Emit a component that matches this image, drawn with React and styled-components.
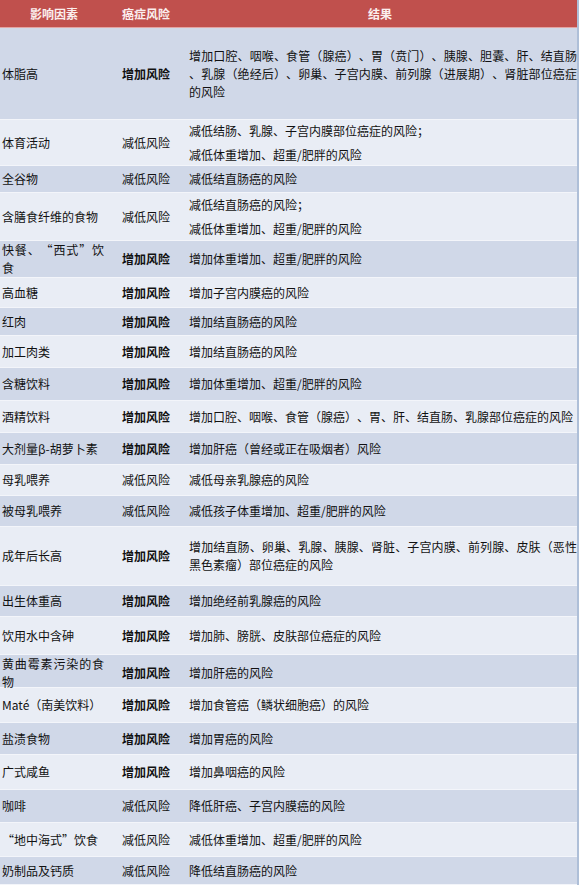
import styled, { createGlobalStyle } from "styled-components";

const GlobalStyle = createGlobalStyle`
    html, body {
        margin: 0;
        padding: 0;
        background: #e9edf4;
        overflow: hidden;
    }
    body {
        font-family: "Noto Sans CJK SC", "Liberation Sans", sans-serif;
    }
`;

const UP = "增加风险";
const DOWN = "减低风险";

const rows = [
    { h: 92, f: "体脂高", r: UP, t: ["增加口腔、咽喉、食管（腺癌）、胃（贲门）、胰腺、胆囊、肝、结直肠、乳腺（绝经后）、卵巢、子宫内膜、前列腺（进展期）、肾脏部位癌症的风险"] },
    { h: 46, f: "体育活动", r: DOWN, t: ["减低结肠、乳腺、子宫内膜部位癌症的风险；", "减低体重增加、超重/肥胖的风险"] },
    { h: 27, f: "全谷物", r: DOWN, t: ["减低结直肠癌的风险"] },
    { h: 48, f: "含膳食纤维的食物", r: DOWN, t: ["减低结直肠癌的风险；", "减低体重增加、超重/肥胖的风险"] },
    { h: 37, f: "快餐、“西式”饮食", r: UP, t: ["增加体重增加、超重/肥胖的风险"] },
    { h: 30, f: "高血糖", r: UP, t: ["增加子宫内膜癌的风险"] },
    { h: 28, f: "红肉", r: UP, t: ["增加结直肠癌的风险"] },
    { h: 32, f: "加工肉类", r: UP, t: ["增加结直肠癌的风险"] },
    { h: 33, f: "含糖饮料", r: UP, t: ["增加体重增加、超重/肥胖的风险"] },
    { h: 32, f: "酒精饮料", r: UP, t: ["增加口腔、咽喉、食管（腺癌）、胃、肝、结直肠、乳腺部位癌症的风险"] },
    { h: 32, f: "大剂量β-胡萝卜素", r: UP, t: ["增加肝癌（曾经或正在吸烟者）风险"] },
    { h: 31, f: "母乳喂养", r: DOWN, t: ["减低母亲乳腺癌的风险"] },
    { h: 31, f: "被母乳喂养", r: DOWN, t: ["减低孩子体重增加、超重/肥胖的风险"] },
    { h: 59, f: "成年后长高", r: UP, t: ["增加结直肠、卵巢、乳腺、胰腺、肾脏、子宫内膜、前列腺、皮肤（恶性黑色素瘤）部位癌症的风险"] },
    { h: 31, f: "出生体重高", r: UP, t: ["增加绝经前乳腺癌的风险"] },
    { h: 38, f: "饮用水中含砷", r: UP, t: ["增加肺、膀胱、皮肤部位癌症的风险"] },
    { h: 33, f: "黄曲霉素污染的食物", r: UP, t: ["增加肝癌的风险"] },
    { h: 35, f: "Maté（南美饮料）", r: UP, t: ["增加食管癌（鳞状细胞癌）的风险"] },
    { h: 32, f: "盐渍食物", r: UP, t: ["增加胃癌的风险"] },
    { h: 35, f: "广式咸鱼", r: UP, t: ["增加鼻咽癌的风险"] },
    { h: 33, f: "咖啡", r: DOWN, t: ["降低肝癌、子宫内膜癌的风险"] },
    { h: 34, f: "“地中海式”饮食", r: DOWN, t: ["减低体重增加、超重/肥胖的风险"] },
    { h: 28, f: "奶制品及钙质", r: DOWN, t: ["降低结直肠癌的风险"] },
];

const App = () => {
    return (
        <>
            <GlobalStyle />
            <Table lang="zh-CN">
                <HeadRow>
                    <HeadCell $align="center">影响因素</HeadCell>
                    <HeadCell>癌症风险</HeadCell>
                    <HeadCell $align="center">结果</HeadCell>
                </HeadRow>
                {rows.map((row, i) => (
                    <Row key={i} $h={row.h} $dark={i % 2 === 0}>
                        <Factor $full={/[“”]/.test(row.f)}>{row.f}</Factor>
                        <Risk $bold={row.r === UP}>{row.r}</Risk>
                        <Result>
                            {row.t.map((p, j) => (
                                <Para key={j}>{p}</Para>
                            ))}
                        </Result>
                    </Row>
                ))}
            </Table>
        </>
    );
};

const Table = styled.div`
    width: 579px;
    border-right: 2px solid #aebfd8;
    box-sizing: border-box;
    color: #111;
    font-size: 12px;
    text-spacing-trim: space-all;
`;

const HeadRow = styled.div`
    display: grid;
    grid-template-columns: 108px 75px 1fr;
    height: 28px;
    box-sizing: border-box;
    background: #c0504d;
    border-bottom: 1px solid #e4a4a2;
`;

const HeadCell = styled.div`
    display: flex;
    align-items: center;
    justify-content: ${props => props.$align === "center" ? "center" : "flex-start"};
    padding-left: ${props => props.$align === "center" ? "0" : "14px"};
    color: #fbeeee;
    font-weight: bold;
    font-size: 12px;
`;

const Row = styled.div`
    display: grid;
    grid-template-columns: 108px 75px 1fr;
    height: ${props => props.$h}px;
    box-sizing: border-box;
    background: ${props => props.$dark ? "#d0d8e8" : "#e9edf5"};
    border-bottom: 1px solid #f3f5fa;
`;

const Cell = styled.div`
    display: flex;
    flex-direction: column;
    justify-content: center;
    line-height: 18px;
`;

const Factor = styled(Cell)`
    display: block;
    align-self: center;
    padding: 0 4px 0 2px;
    text-align: justify;
    text-align-last: left;
    line-break: anywhere;
    font-variant-east-asian: ${props => props.$full ? "full-width" : "normal"};
`;

const Risk = styled(Cell)`
    padding-left: 14px;
    font-weight: ${props => props.$bold ? "bold" : "normal"};
    white-space: nowrap;
`;

const Result = styled(Cell)`
    padding: 0 0 0 6px;
    gap: 6px;
`;

const Para = styled.div`
    text-align: justify;
    text-align-last: left;
    line-break: anywhere;
    line-height: 18px;
`;

export default App;
